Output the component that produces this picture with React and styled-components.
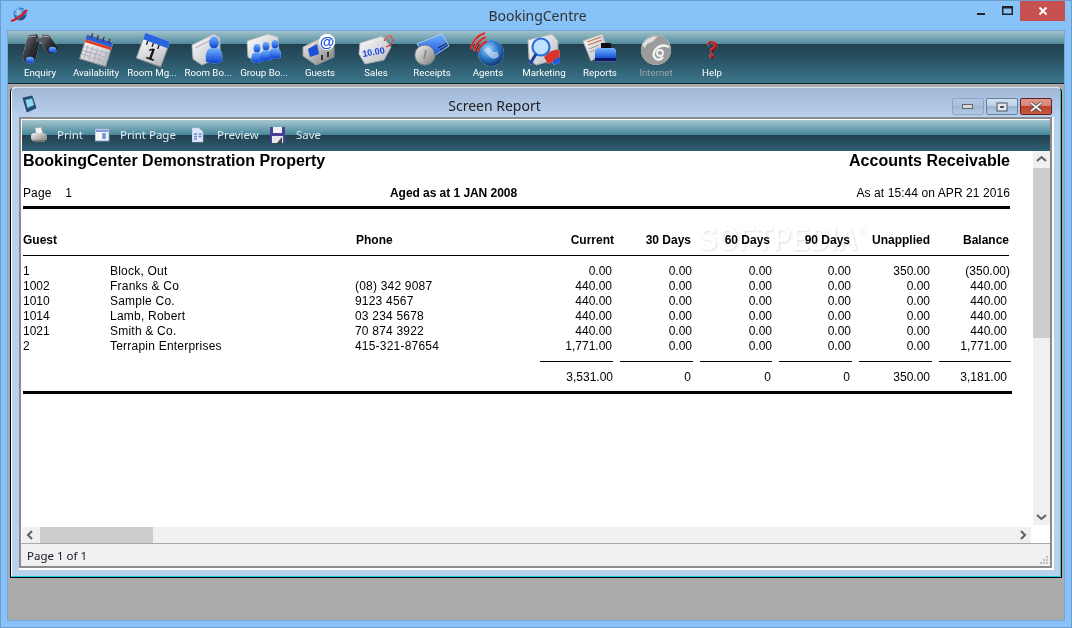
import React from "react";
import styled, { createGlobalStyle } from "styled-components";

const Global = createGlobalStyle`
  html, body { margin: 0; padding: 0; width: 1072px; height: 628px; overflow: hidden; background: #87c3f9; }
  #root { width: 1072px; height: 628px; }
  * { box-sizing: border-box; }
`;

const sans = `"Liberation Sans", Arial, sans-serif`;
const ui = `"Noto Sans", "Open Sans", sans-serif`;

const Frame = styled.div`
  width: 1072px; height: 628px; background: #87c3f9; border: 1px solid #6d9ecb;
  display: flex; flex-direction: column; font-family: ${ui};
`;
const TitleBar = styled.div`
  height: 29px; flex: none; display: flex; align-items: flex-start; padding-left: 9px;
`;
const AppTitle = styled.div`
  flex: 1; text-align: center; font-size: 14px; line-height: 30px; color: #333; padding-left: 80px;
`;
const AppMark = styled.svg`
  width: 18px; height: 16px; margin-top: 6px; flex: none;
`;
const Caption = styled.div`
  display: flex; flex: none; margin-right: 6px; height: 20px;
`;
const CaptionBtn = styled.div`
  width: ${p => p.$w}px; height: 20px; display: flex; align-items: center; justify-content: center;
  background: ${p => p.$close ? "#c75050" : "transparent"};
`;
const Workspace = styled.div`
  flex: 1; margin: 0 6px 6px; border: 1px solid #76a5d4; background: #ababab; display: flex; flex-direction: column; min-height: 0;
`;
const MainBar = styled.div`
  height: 53px; flex: none; display: flex; padding-left: 4px; border-bottom: 1px solid #14262f;
  background: linear-gradient(180deg, #a1c3cb 0, #4f8a9c 13px, #21404f 13px, #2a5567 30px, #3c768c 100%);
`;
const MainBtn = styled.div`
  width: 56px; display: flex; flex-direction: column; align-items: center; padding-top: 2px;
`;
const IconSvg = styled.svg`
  width: 36px; height: 33px; flex: none; overflow: visible;
  filter: drop-shadow(0 0 0.7px rgba(255,255,255,.95));
`;
const MainLabel = styled.span`
  font-family: Roboto, ${ui}; font-size: 9.7px; line-height: 12px; margin-top: 1px; white-space: nowrap;
  color: ${p => p.$off ? "#9aa6ab" : "#fff"};
`;
const Desk = styled.div`
  flex: 1; padding: 3px 2px 0; min-height: 0;
`;
const Child = styled.div`
  height: 491px; display: flex; flex-direction: column; padding: 0 9px 9px 8px;
  border: 1px solid #000; border-top-color: #dfe8f2; border-radius: 5px 5px 0 0;
  background: linear-gradient(180deg, #a1b9d7 0, #b9d1ed 30px, #b9d1ed 100%);
  box-shadow: inset -1px -1px 0 #16c8e2, inset 1px 0 0 #fff;
`;
const ChildTitle = styled.div`
  height: 29px; flex: none; display: flex; align-items: center;
`;
const ChildMark = styled.svg`
  width: 15px; height: 18px; margin-left: 3px; margin-top: 2px; flex: none;
`;
const ChildText = styled.div`
  flex: 1; text-align: center; font-size: 14px; color: #222; margin-left: 0; margin-top: 5px;
`;
const ChildBtns = styled.div`
  display: flex; gap: 2px; margin-top: 8px; flex: none;
`;
const ChildBtn = styled.div`
  width: ${p => p.$w}px; height: 17px; display: flex; align-items: center; justify-content: center; border-radius: 2px;
  border: 1px solid ${p => p.$kind === "close" ? "#5f1f2a" : p.$kind === "max" ? "#6a7f99" : "#8ea6c4"};
  background: ${p => p.$kind === "close"
    ? "linear-gradient(180deg, #dd9585 0, #d48676 45%, #b9442a 50%, #c65a3f 100%)"
    : p.$kind === "max"
      ? "linear-gradient(180deg, #d2e0f0 0, #bed0e6 45%, #98b4d2 50%, #b4cce6 100%)"
      : "linear-gradient(180deg, #b3c8e2 0, #a9c0dc 45%, #9cb6d6 50%, #b2cae6 100%)"};
`;
const Inner = styled.div`
  height: 451px; flex: none; border: 2px solid #8b8b8b; background: #fff; padding: 1px 0 0 1px;
  display: flex; flex-direction: column; box-shadow: 1px 1px 0 1px #fff;
`;
const ReportBar = styled.div`
  height: 31px; flex: none; display: flex; align-items: center; padding: 0 0 2px 8px;
  background: linear-gradient(180deg, #a6c8cf 0, #46859b 15px, #21404f 15px, #2f5f73 100%);
`;
const ReportBtn = styled.div`
  width: ${p => p.$w}px; flex: none; display: flex; align-items: center; gap: ${p => p.$gap}px;
`;
const SmallIcon = styled.svg`
  width: 18px; height: 18px; flex: none;
`;
const ReportLabel = styled.span`
  font-family: ${ui}; font-size: 11.5px; color: #dfe8ee; white-space: nowrap;
`;
const ScrollGrid = styled.div`
  height: 392px; flex: none; display: grid; grid-template-columns: 1009px 17px; grid-template-rows: 374px 16px; gap: 2px;
`;
const Report = styled.div`
  position: relative; overflow: hidden; padding-left: 1px; font-family: ${sans}; font-size: 12px; color: #000;
`;
const HeadLine = styled.div`
  display: flex; justify-content: space-between; width: 987px; font-size: 16px; font-weight: 700; line-height: 19px;
`;
const PageLine = styled.div`
  display: grid; grid-template-columns: 367px 1fr auto; width: 987px; margin-top: 16px; line-height: 15px;
`;
const PageNo = styled.span`
  white-space: pre; letter-spacing: .1px;
`;
const Bold = styled.span`
  font-weight: 700; letter-spacing: -.05px;
`;
const AsAt = styled.span`
  letter-spacing: .08px;
`;
const HeavyRule = styled.div`
  height: 3px; background: #000; width: ${p => p.$w}px; margin-top: ${p => p.$top}px;
`;
const ThinRule = styled.div`
  height: 1px; background: #000; width: 986px; margin-top: 7px;
`;
const TableRow = styled.div`
  display: grid; grid-template-columns: 87px 245px 185px 72px 80px 80px 79px 79px 77px; line-height: 15px;
  margin-top: ${p => p.$top || 0}px; font-weight: ${p => p.$bold ? 700 : 400}; white-space: nowrap;
`;
const Num = styled.span`
  text-align: right; margin-right: ${p => p.$shift || 0}px;
`;
const Phone = styled.span`
  margin-left: ${p => p.$shift || 0}px; letter-spacing: ${p => p.$spread ? ".2px" : "0"};
`;
const Name = styled.span`
  letter-spacing: .22px;
`;
const SubRules = styled.div`
  display: flex; gap: 7px; margin: 7px 0 0 517px;
`;
const SubRule = styled.div`
  height: 1px; width: ${p => p.$w}px; background: #000; flex: none;
`;
const Watermark = styled.div`
  position: absolute; left: 677px; top: 66px; font-family: ${sans}; font-weight: 700; font-size: 27px; line-height: 31px;
  letter-spacing: .5px; color: #fff; text-shadow: 1px 1px 2px rgba(0,0,0,.13); white-space: nowrap; pointer-events: none;
  mix-blend-mode: multiply; transform: scaleY(1.25);
`;
const Reg = styled.sup`
  font-size: 9px; font-weight: 400; vertical-align: 12px;
`;
const VScroll = styled.div`
  background: #f0f0f0; display: flex; flex-direction: column; align-items: center;
`;
const VThumb = styled.div`
  width: 100%; height: 170px; background: #cdcdcd; margin-top: 1px; margin-bottom: auto;
`;
const HScroll = styled.div`
  background: #f0f0f0; display: flex; align-items: center;
`;
const HThumb = styled.div`
  height: 100%; width: 113px; background: #cdcdcd; margin-left: 1px; margin-right: auto;
`;
const Arrow = styled.svg`
  flex: none; width: 17px; height: 16px;
`;
const Corner = styled.div`
  background: #fff;
`;
const Status = styled.div`
  height: 23px; flex: none; margin-left: -1px; border-top: 1px solid #a9a9a9; background: #f0f0f0; display: flex;
  align-items: center; justify-content: space-between; padding-left: 6px; font-size: 11.5px; color: #141424;
`;
const Grip = styled.svg`
  width: 10px; height: 10px; align-self: flex-end; margin: 0 1px 1px 0;
`;

const GradDefs = styled.svg`
  width: 0; height: 0; flex: none; display: block;
`;
const Defs = () => (
  <GradDefs aria-hidden="true">
    <defs>
      <radialGradient id="gGlobe" cx="40%" cy="35%" r="70%">
        <stop offset="0" stopColor="#a9d4f5" /><stop offset=".5" stopColor="#2f7fd0" /><stop offset="1" stopColor="#0b2f66" />
      </radialGradient>
      <linearGradient id="gBlue" x1="0" y1="0" x2="0" y2="1">
        <stop offset="0" stopColor="#6fb2ff" /><stop offset="1" stopColor="#0a3fd0" />
      </linearGradient>
      <linearGradient id="gPaper" x1="0" y1="0" x2="1" y2="1">
        <stop offset="0" stopColor="#ffffff" /><stop offset="1" stopColor="#b5b8bf" />
      </linearGradient>
      <linearGradient id="gDark" x1="0" y1="0" x2="1" y2="1">
        <stop offset="0" stopColor="#7a7d84" /><stop offset=".5" stopColor="#303237" /><stop offset="1" stopColor="#0c0d10" />
      </linearGradient>
      <linearGradient id="gSilver" x1="0" y1="0" x2="1" y2="1">
        <stop offset="0" stopColor="#f4f4f4" /><stop offset="1" stopColor="#7c7c7c" />
      </linearGradient>
    </defs>
  </GradDefs>
);

const Person = ({ x, y, s = 1 }) => (
  <g transform={`translate(${x} ${y}) scale(${s})`}>
    <ellipse cx="0" cy="-7" rx="3.6" ry="4.6" fill="url(#gBlue)" />
    <path d="M-6 7 Q-7 -2 -2 -3 L2 -3 Q7 -2 6 7 Q0 10 -6 7Z" fill="url(#gBlue)" />
  </g>
);

const Binoculars = () => (
  <IconSvg viewBox="0 0 36 33">
    <path d="M7 2 L15 1 L18 8 L14 25 Q11 32 5 30 Q0 28 1 22 L4 8Z" fill="url(#gDark)" />
    <path d="M20 1 L27 2 L35 13 Q36 19 31 21 Q26 22 24 18 L19 9Z" fill="url(#gDark)" />
    <rect x="14" y="5" width="8" height="4" fill="#55585f" />
    <path d="M7 4 L14 3M21 3 L27 4" stroke="#a8abb1" strokeWidth="1.2" />
    <ellipse cx="8" cy="27" rx="4.2" ry="3.2" fill="url(#gBlue)" />
    <ellipse cx="30.5" cy="17" rx="3.8" ry="3.2" fill="url(#gBlue)" />
  </IconSvg>
);
const Calendar = () => (
  <IconSvg viewBox="0 0 36 33">
    <g transform="rotate(17 18 17)">
      <rect x="5" y="5" width="27" height="25" fill="url(#gPaper)" stroke="#666" strokeWidth=".6" />
      <rect x="5" y="5" width="27" height="5" fill="#2a5fd8" />
      <rect x="5" y="10" width="27" height="2.6" fill="#e23a1c" />
      <path d="M9 15v13M14 15v13M19 15v13M24 15v13M29 15v13M6 17h25M6 21h25M6 25h25" stroke="#b4b4bc" strokeWidth="1.2" />
      <path d="M10 2v5M16 2v5M22 2v5M28 2v5" stroke="#39393f" strokeWidth="1.6" />
    </g>
  </IconSvg>
);
const RoomMgr = () => (
  <IconSvg viewBox="0 0 36 33">
    <g transform="rotate(20 18 17)">
      <rect x="6" y="5" width="26" height="25" fill="url(#gPaper)" stroke="#555" strokeWidth=".6" />
      <rect x="6" y="3" width="26" height="7" fill="#2a63e0" />
      <path d="M11 10v4M17 10v4M23 10v4" stroke="#222" strokeWidth="1.4" />
      <text x="19" y="27" textAnchor="middle" fontFamily={sans} fontSize="17" fontWeight="700" fill="#111">1</text>
    </g>
  </IconSvg>
);
const RoomBook = () => (
  <IconSvg viewBox="0 0 36 33">
    <path d="M2 12 L24 1 L30 5 L30 24 L12 32 L3 26Z" fill="url(#gPaper)" stroke="#777" strokeWidth=".5" />
    <path d="M5 15 L25 5" stroke="#999" strokeWidth=".8" />
    <Person x={24} y={19} s={1.35} />
  </IconSvg>
);
const GroupBook = () => (
  <IconSvg viewBox="0 0 36 33">
    <path d="M1 8 L22 1 L32 4 L33 20 L12 30 L2 24Z" fill="url(#gPaper)" stroke="#777" strokeWidth=".5" />
    <Person x={11} y={22} s={.95} />
    <Person x={20} y={20} s={.95} />
    <Person x={29} y={18} s={.95} />
  </IconSvg>
);
const Guests = () => (
  <IconSvg viewBox="0 0 36 33">
    <path d="M1 14 L19 5 L32 14 L32 24 L14 32 L1 23Z" fill="url(#gSilver)" stroke="#666" strokeWidth=".5" />
    <path d="M6 16 L15 11 L17 21 L8 24Z" fill="#1d4fd8" />
    <path d="M19 22h2v5h-2zM25 19h2v5h-2z" fill="#333" />
    <circle cx="25" cy="9" r="8" fill="#fff" />
    <text x="25" y="14" textAnchor="middle" fontFamily={sans} fontSize="15" fontWeight="700" fill="#1d4fd8">@</text>
  </IconSvg>
);
const Sales = () => (
  <IconSvg viewBox="0 0 36 33">
    <path d="M2 10 L24 3 L33 14 L26 27 L7 31 L1 21Z" fill="url(#gPaper)" stroke="#777" strokeWidth=".5" />
    <path d="M26 8 Q32 -1 34 5 Q36 11 28 14" fill="none" stroke="#d8342a" strokeWidth="1.3" />
    <text x="16" y="22" textAnchor="middle" fontFamily={sans} fontSize="9" fontWeight="700" fill="#1540e0" transform="rotate(-10 16 22)">10.00</text>
  </IconSvg>
);
const Receipts = () => (
  <IconSvg viewBox="0 0 36 33">
    <path d="M3 11 L28 1 L35 13 L13 27Z" fill="url(#gBlue)" stroke="#a8c8f0" strokeWidth=".5" />
    <path d="M24 15l9-5M26 17l8-5" stroke="#1a1a2a" strokeWidth="1" />
    <circle cx="11" cy="22" r="10" fill="url(#gSilver)" stroke="#555" strokeWidth=".6" />
    <path d="M12 17l-2 9" stroke="#888" strokeWidth="1.6" />
  </IconSvg>
);
const Agents = () => (
  <IconSvg viewBox="0 0 36 33">
    <circle cx="21" cy="20" r="13" fill="url(#gGlobe)" />
    <path d="M14 17q4-4 7 0t6 1l2 5q-5 5-9 1t-6-7Z" fill="#cfe4f5" opacity=".65" />
    <path d="M1 16 Q3 4 15 0M4 18 Q6 8 16 4M8 19 Q9 12 17 8" fill="none" stroke="#d8261e" strokeWidth="2" />
  </IconSvg>
);
const Marketing = () => (
  <IconSvg viewBox="0 0 36 33">
    <path d="M2 7 L26 1 L32 8 L32 26 L10 32 L3 26Z" fill="url(#gPaper)" stroke="#777" strokeWidth=".5" />
    <path d="M18 24 Q28 14 34 18 L33 26 L22 31Z" fill="#d8342a" />
    <path d="M26 30 Q30 24 34 25 L34 29 L28 32Z" fill="#1d5be0" />
    <circle cx="15" cy="14" r="8.5" fill="#bfe0ff" stroke="#2a6fe0" strokeWidth="2.2" />
    <path d="M10 21 L4 31" stroke="#1d3fa8" strokeWidth="3" />
  </IconSvg>
);
const Reports = () => (
  <IconSvg viewBox="0 0 36 33">
    <path d="M1 8 L20 1 L26 18 L9 28Z" fill="url(#gPaper)" stroke="#777" strokeWidth=".5" />
    <path d="M5 9 L19 4M6 12 L20 7" stroke="#c8704a" strokeWidth="1.3" />
    <path d="M7 16 L17 12M8 19 L18 15" stroke="#999" strokeWidth="1" />
    <rect x="19" y="10" width="10" height="6" fill="#0c0c12" />
    <path d="M13 20 Q13 15 18 15 L30 15 Q34 15 34 20 L34 27 L13 27Z" fill="url(#gBlue)" />
    <rect x="13" y="25" width="21" height="3.5" fill="#081a66" />
  </IconSvg>
);
const Internet = () => (
  <IconSvg viewBox="0 0 36 33">
    <circle cx="18" cy="17" r="15" fill="#9c9c9c" />
    <path d="M4 12 Q9 3 20 3 L14 9 Q8 10 7 15Z" fill="#e0e0e0" />
    <path d="M31 14 Q24 10 18 16 Q13 22 18 26 Q22 28 25 24" fill="none" stroke="#f4f4f4" strokeWidth="2.4" />
    <circle cx="22" cy="20" r="3" fill="none" stroke="#f4f4f4" strokeWidth="1.8" />
  </IconSvg>
);
const HelpText = styled.text`
  font-family: "Liberation Serif", serif; font-size: 25px; font-weight: 700;
`;
const Help = () => (
  <IconSvg viewBox="0 0 36 33">
    <HelpText x="19" y="26" textAnchor="middle" fill="#2a1a1a">?</HelpText>
    <HelpText x="18" y="25" textAnchor="middle" fill="#c81e22">?</HelpText>
  </IconSvg>
);

const tools = [
  ["Enquiry", Binoculars], ["Availability", Calendar], ["Room Mg...", RoomMgr], ["Room Bo...", RoomBook],
  ["Group Bo...", GroupBook], ["Guests", Guests], ["Sales", Sales], ["Receipts", Receipts], ["Agents", Agents],
  ["Marketing", Marketing], ["Reports", Reports], ["Internet", Internet, true], ["Help", Help],
];

const PrinterIcon = () => (
  <SmallIcon viewBox="0 0 18 18">
    <path d="M5 2 L11 1 L13 7 L6 8Z" fill="#f2f2f2" stroke="#8a8a8a" strokeWidth=".5" />
    <path d="M1 10 Q1 7 5 7 L13 7 Q17 7 17 11 L17 14 L3 15 Q1 14 1 12Z" fill="url(#gSilver)" />
    <rect x="4" y="14" width="11" height="2" fill="#777" />
  </SmallIcon>
);
const PageIcon = () => (
  <SmallIcon viewBox="2 0 18 18">
    <rect x="2" y="3" width="14" height="12" fill="#f4f7fc" stroke="#8d99c9" />
    <rect x="3" y="4" width="12" height="2" fill="#7f9ad6" />
    <rect x="9" y="7" width="4" height="6" fill="#7ea2d8" />
  </SmallIcon>
);
const PreviewIcon = () => (
  <SmallIcon viewBox="4 0 18 18">
    <path d="M4 2 L11 2 L15 6 L15 16 L4 16Z" fill="#dfe6fa" stroke="#b3bfe8" strokeWidth=".6" />
    <path d="M6 8h3M6 10.5h3M6 13h3M10.5 8h3M10.5 10.5h3" stroke="#6f89d0" strokeWidth="1.3" />
  </SmallIcon>
);
const SaveIcon = () => (
  <SmallIcon viewBox="1 0 18 18">
    <path d="M1 1 L16 1 L16 17 L1 17Z" fill="#4a3f96" />
    <rect x="4" y="1" width="9" height="6" fill="#f0f0f4" />
    <rect x="3" y="10" width="11" height="7" fill="#e8e8ec" />
    <path d="M8 17 L13 11 L13 17Z" fill="#444" />
  </SmallIcon>
);

const rows = [
  ["1", "Block, Out", "", "0.00", "0.00", "0.00", "0.00", "350.00", "(350.00)"],
  ["1002", "Franks & Co", "(08) 342 9087", "440.00", "0.00", "0.00", "0.00", "0.00", "440.00"],
  ["1010", "Sample Co.", "9123 4567", "440.00", "0.00", "0.00", "0.00", "0.00", "440.00"],
  ["1014", "Lamb, Robert", "03 234 5678", "440.00", "0.00", "0.00", "0.00", "0.00", "440.00"],
  ["1021", "Smith & Co.", "70 874 3922", "440.00", "0.00", "0.00", "0.00", "0.00", "440.00"],
  ["2", "Terrapin Enterprises", "415-321-87654", "1,771.00", "0.00", "0.00", "0.00", "0.00", "1,771.00"],
];

const Chevron = ({ d }) => (
  <Arrow viewBox="0 0 17 16">
    <polyline points={d} fill="none" stroke="#606060" strokeWidth="2" />
  </Arrow>
);

export default function App() {
  return (
    <Frame>
      <Global />
      <Defs />
      <TitleBar>
        <AppMark viewBox="0 0 18 16">
          <circle cx="10" cy="7" r="6.5" fill="url(#gGlobe)" />
          <path d="M5 3 Q10 6 15 2M4 7h12M8 1 Q6 7 9 13" stroke="#cde" strokeWidth=".7" fill="none" />
          <path d="M1 14 Q9 12 17 3" stroke="#e01818" strokeWidth="2" fill="none" />
        </AppMark>
        <AppTitle>BookingCentre</AppTitle>
        <Caption>
          <CaptionBtn $w={27}>
            <svg width="10" height="10" viewBox="0 0 10 10"><rect x="1" y="7" width="8" height="2" fill="#222" /></svg>
          </CaptionBtn>
          <CaptionBtn $w={26}>
            <svg width="11" height="10" viewBox="0 0 11 10"><rect x=".75" y=".75" width="9.5" height="7.5" fill="none" stroke="#222" strokeWidth="1.5" /><rect x="0" y="0" width="11" height="2.5" fill="#222" /></svg>
          </CaptionBtn>
          <CaptionBtn $w={45} $close>
            <svg width="10" height="10" viewBox="0 0 10 10"><path d="M1.5 1.5l7 7M8.5 1.5l-7 7" stroke="#fff" strokeWidth="2" /></svg>
          </CaptionBtn>
        </Caption>
      </TitleBar>
      <Workspace>
        <MainBar>
          {tools.map(([label, Ico, off]) => (
            <MainBtn key={label}>
              <Ico />
              <MainLabel $off={off}>{label}</MainLabel>
            </MainBtn>
          ))}
        </MainBar>
        <Desk>
          <Child>
            <ChildTitle>
              <ChildMark viewBox="0 0 15 18">
                <path d="M1 3 L10 1 L14 13 L5 17Z" fill="#27507e" stroke="#0f2f55" strokeWidth=".7" />
                <path d="M3.5 5 L10 3.5 L12 10 L5.5 13Z" fill="#8fd6ef" />
              </ChildMark>
              <ChildText>Screen Report</ChildText>
              <ChildBtns>
                <ChildBtn $w={32} $kind="min">
                  <svg width="12" height="6" viewBox="0 0 12 6"><rect x=".5" y=".5" width="10" height="4" fill="#d8d8d8" stroke="#666" /></svg>
                </ChildBtn>
                <ChildBtn $w={32} $kind="max">
                  <svg width="12" height="10" viewBox="0 0 12 10"><rect x="1" y="1" width="10" height="8" fill="#e6e6ea" stroke="#4a5266" /><rect x="4" y="4" width="4" height="2" fill="#4a5266" /></svg>
                </ChildBtn>
                <ChildBtn $w={32} $kind="close">
                  <svg width="14" height="10" viewBox="0 0 14 10"><path d="M2 1l10 8M12 1L2 9" stroke="#4a4a4a" strokeWidth="3.4" /><path d="M2 1l10 8M12 1L2 9" stroke="#eee" strokeWidth="1.8" /></svg>
                </ChildBtn>
              </ChildBtns>
            </ChildTitle>
            <Inner>
              <ReportBar>
                <ReportBtn $w={65} $gap={9}><PrinterIcon /><ReportLabel>Print</ReportLabel></ReportBtn>
                <ReportBtn $w={97} $gap={7}><PageIcon /><ReportLabel>Print Page</ReportLabel></ReportBtn>
                <ReportBtn $w={78} $gap={7}><PreviewIcon /><ReportLabel>Preview</ReportLabel></ReportBtn>
                <ReportBtn $w={78} $gap={8}><SaveIcon /><ReportLabel>Save</ReportLabel></ReportBtn>
              </ReportBar>
              <ScrollGrid>
                <Report>
                  <HeadLine><span>BookingCenter Demonstration Property</span><span>Accounts Receivable</span></HeadLine>
                  <PageLine>
                    <PageNo>{"Page    1"}</PageNo>
                    <Bold>Aged as at 1 JAN 2008</Bold>
                    <AsAt>As at 15:44 on APR 21 2016</AsAt>
                  </PageLine>
                  <HeavyRule $w={987} $top={5} />
                  <TableRow $bold $top={24}>
                    <span>Guest</span><span />
                    <Phone $shift={1}>Phone</Phone>
                    <Num $shift={-2}>Current</Num><Num $shift={1}>30 Days</Num><Num $shift={2}>60 Days</Num>
                    <Num $shift={1}>90 Days</Num><Num>Unapplied</Num><Num $shift={-2}>Balance</Num>
                  </TableRow>
                  <ThinRule />
                  {rows.map((r, i) => (
                    <TableRow key={r[0]} $top={i === 0 ? 8 : 0}>
                      <span>{r[0]}</span><Name>{r[1]}</Name><Phone $spread>{r[2]}</Phone>
                      <Num>{r[3]}</Num><Num>{r[4]}</Num><Num>{r[5]}</Num><Num>{r[6]}</Num><Num>{r[7]}</Num>
                      <Num $shift={r[8].startsWith("(") ? -3 : 0}>{r[8]}</Num>
                    </TableRow>
                  ))}
                  <SubRules>
                    {[73, 73, 72, 73, 73, 72].map((w, i) => <SubRule key={i} $w={w} />)}
                  </SubRules>
                  <TableRow $top={8}>
                    <span /><span /><span />
                    <Num $shift={-1}>3,531.00</Num><Num $shift={1}>0</Num><Num $shift={1}>0</Num><Num $shift={1}>0</Num><Num>350.00</Num><Num>3,181.00</Num>
                  </TableRow>
                  <HeavyRule $w={989} $top={6} />
                  <Watermark>SOFTPEDIA<Reg>®</Reg></Watermark>
                </Report>
                <VScroll>
                  <Chevron d="4,10 8.5,6 13,10" />
                  <VThumb />
                  <Chevron d="4,6 8.5,10 13,6" />
                </VScroll>
                <HScroll>
                  <Chevron d="10,4 6,8 10,12" />
                  <HThumb />
                  <Chevron d="7,4 11,8 7,12" />
                </HScroll>
                <Corner />
              </ScrollGrid>
              <Status>
                <span>Page 1 of 1</span>
                <Grip viewBox="0 0 10 10">
                  <path d="M7 1h2v2H7zM4 4h2v2H4zM7 4h2v2H7zM1 7h2v2H1zM4 7h2v2H4zM7 7h2v2H7z" fill="#bdbdbd" />
                </Grip>
              </Status>
            </Inner>
          </Child>
        </Desk>
      </Workspace>
    </Frame>
  );
}
